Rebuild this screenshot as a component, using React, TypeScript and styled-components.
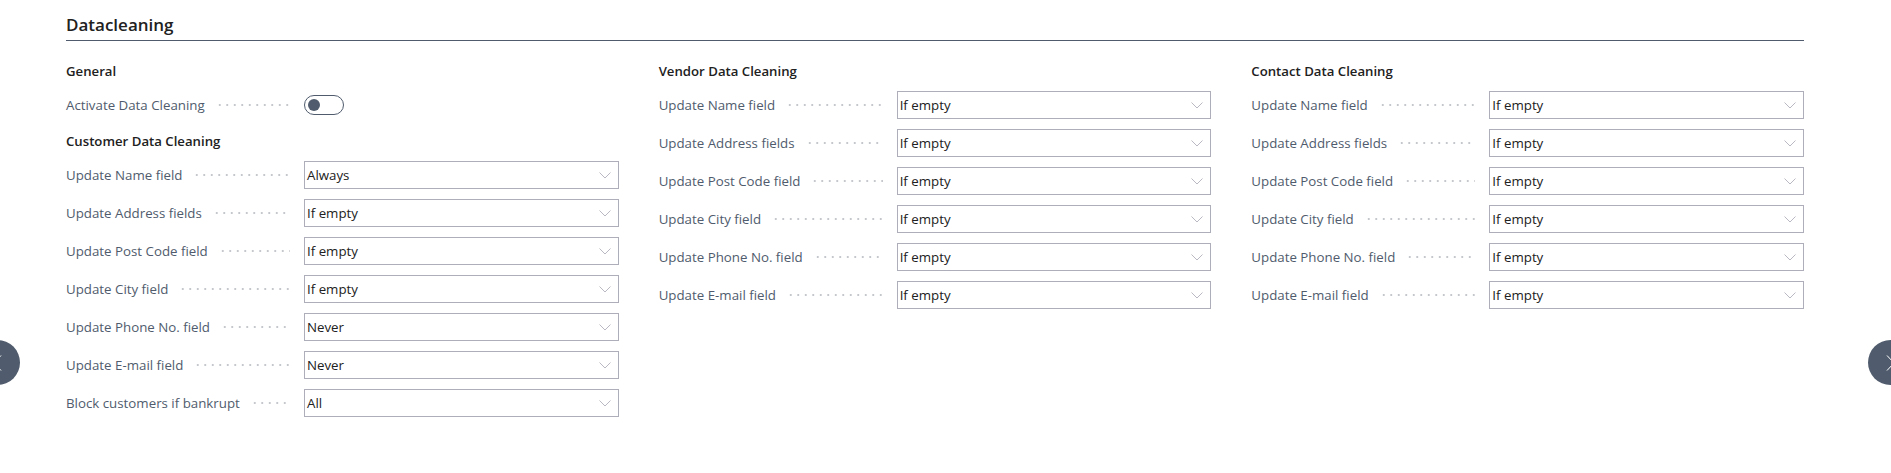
import { FC } from "react";
import styled, { createGlobalStyle } from "styled-components";

type Field = { label: string; value: string };

const customerFields: Field[] = [
  { label: "Update Name field", value: "Always" },
  { label: "Update Address fields", value: "If empty" },
  { label: "Update Post Code field", value: "If empty" },
  { label: "Update City field", value: "If empty" },
  { label: "Update Phone No. field", value: "Never" },
  { label: "Update E-mail field", value: "Never" },
  { label: "Block customers if bankrupt", value: "All" },
];

const commonFields: Field[] = [
  { label: "Update Name field", value: "If empty" },
  { label: "Update Address fields", value: "If empty" },
  { label: "Update Post Code field", value: "If empty" },
  { label: "Update City field", value: "If empty" },
  { label: "Update Phone No. field", value: "If empty" },
  { label: "Update E-mail field", value: "If empty" },
];

const Chevron: FC<{ dir: "down" | "left" | "right"; color: string }> = ({ dir, color }) => {
  if (dir === "down") {
    return (
      <svg width="12" height="7" viewBox="0 0 12 7">
        <path d="M0.5 0.5 L6 6 L11.5 0.5" fill="none" stroke={color} strokeWidth="1" />
      </svg>
    );
  }
  return (
    <svg width="9" height="16" viewBox="0 0 9 16">
      <path
        d={dir === "left" ? "M8 0.5 L1 8 L8 15.5" : "M1 0.5 L8 8 L1 15.5"}
        fill="none"
        stroke={color}
        strokeWidth="1"
      />
    </svg>
  );
};

const FieldRow: FC<{ label: string; children: React.ReactNode }> = ({ label, children }) => (
  <Row>
    <Caption>
      <span>{label}</span>
      <Leader />
    </Caption>
    {children}
  </Row>
);

const SelectBox: FC<{ value: string }> = ({ value }) => (
  <Select>
    <span>{value}</span>
    <Chevron dir="down" color="#b9b9c3" />
  </Select>
);

const FieldList: FC<{ fields: Field[] }> = ({ fields }) => (
  <>
    {fields.map((f) => (
      <FieldRow key={f.label} label={f.label}>
        <SelectBox value={f.value} />
      </FieldRow>
    ))}
  </>
);

const App: FC = () => {
  return (
    <>
      <GlobalStyle />
      <Page>
        <Header>
          <Title>Datacleaning</Title>
        </Header>
        <Columns>
          <Column>
            <GroupHeading>General</GroupHeading>
            <FieldRow label="Activate Data Cleaning">
              <Toggle>
                <Knob />
              </Toggle>
            </FieldRow>
            <GroupHeading $spaced>Customer Data Cleaning</GroupHeading>
            <FieldList fields={customerFields} />
          </Column>
          <Column>
            <GroupHeading>Vendor Data Cleaning</GroupHeading>
            <FieldList fields={commonFields} />
          </Column>
          <Column>
            <GroupHeading>Contact Data Cleaning</GroupHeading>
            <FieldList fields={commonFields} />
          </Column>
        </Columns>
      </Page>
      <NavButton $side="left">
        <Chevron dir="left" color="#ffffff" />
      </NavButton>
      <NavButton $side="right">
        <Chevron dir="right" color="#ffffff" />
      </NavButton>
    </>
  );
};

const GlobalStyle = createGlobalStyle`
  body {
    margin: 0;
    background: #ffffff;
    font-family: "Open Sans", "Noto Sans", sans-serif;
    overflow: hidden;
  }
`;

const Page = styled.div`
  padding: 12px 87px 0 66px;
`;

const Header = styled.div`
  padding-bottom: 2px;
  border-bottom: 1px solid #505c6d;
`;

const Title = styled.h2`
  margin: 0;
  font-size: 17px;
  line-height: 26px;
  font-weight: 600;
  color: #212121;
`;

const Columns = styled.div`
  display: grid;
  grid-template-columns: repeat(3, 1fr);
  column-gap: 40px;
  margin-top: 20px;
`;

const Column = styled.div`
  display: flex;
  flex-direction: column;
  min-width: 0;
`;

const GroupHeading = styled.h3<{ $spaced?: boolean }>`
  margin: ${(p) => (p.$spaced ? "2px" : "0")} 0 10px;
  font-size: 13.2px;
  line-height: 20px;
  font-weight: 600;
  color: #212121;
`;

const Row = styled.div`
  display: grid;
  grid-template-columns: 238px 1fr;
  align-items: center;
  height: 28px;
  margin-bottom: 10px;
`;

const Caption = styled.div`
  display: flex;
  align-items: center;
  padding-right: 14px;
  font-size: 13.3px;
  color: #505c6d;
  white-space: nowrap;
`;

const Leader = styled.div`
  flex: 1;
  height: 4px;
  margin-left: 11px;
  background-image: radial-gradient(circle, #c4c7cc 0.8px, transparent 1.3px);
  background-size: 7.5px 4px;
  background-repeat: repeat-x;
  background-position: left center;
`;

const Select = styled.div`
  box-sizing: border-box;
  height: 28px;
  display: flex;
  align-items: center;
  justify-content: space-between;
  padding: 0 7px 0 2px;
  border: 1px solid #aeaebb;
  background: #ffffff;
  font-size: 13.3px;
  color: #212121;
`;

const Toggle = styled.div`
  box-sizing: border-box;
  width: 40px;
  height: 20px;
  display: flex;
  align-items: center;
  padding-left: 3px;
  border: 1px solid #505c6d;
  border-radius: 10px;
`;

const Knob = styled.div`
  width: 12px;
  height: 12px;
  border-radius: 50%;
  background: #505c6d;
`;

const NavButton = styled.div<{ $side: "left" | "right" }>`
  position: fixed;
  top: 340px;
  ${(p) => (p.$side === "left" ? "left: -25px;" : "left: 1868px;")}
  width: 45px;
  height: 45px;
  border-radius: 50%;
  background: #505c6d;
  display: flex;
  align-items: center;
  justify-content: center;
`;

export default App;
